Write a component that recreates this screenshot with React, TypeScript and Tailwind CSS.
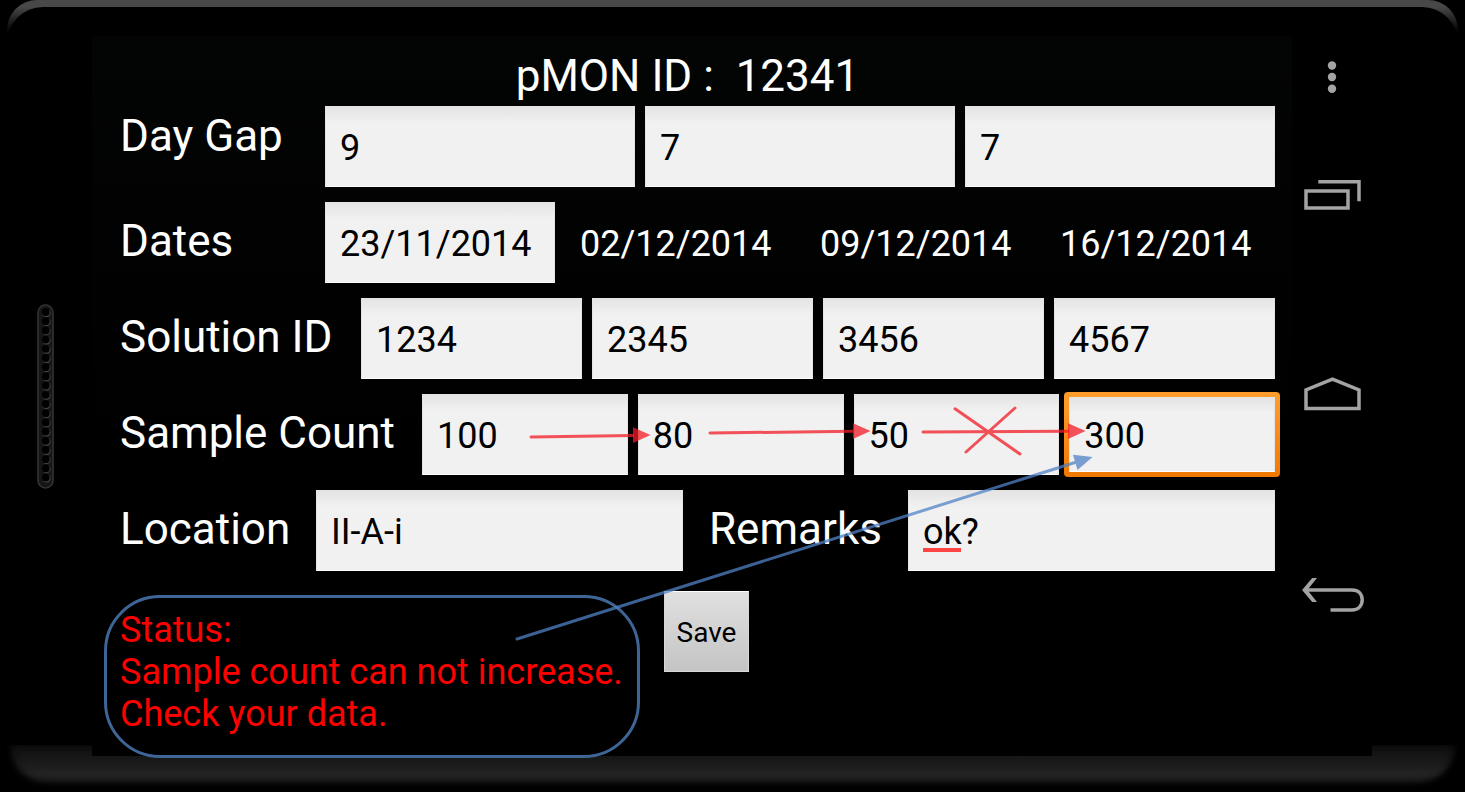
import type { InputHTMLAttributes, ReactNode } from "react";

const speakerHoles = Array.from({ length: 19 }, (_, i) => 8 + i * 9.2);

function Field({ className = "", ...rest }: InputHTMLAttributes<HTMLInputElement>) {
  return (
    <input
      type="text"
      className={`h-[81px] w-full min-w-0 border border-[#e4e4e4] border-b-white bg-[#f1f1f1] bg-linear-to-b from-[#e4e4e4] to-[#f1f1f1] to-20% pt-0.5 pl-[14px] text-[36px] text-black outline-none ${className}`}
      {...rest}
    />
  );
}

function Row({ children }: { children: ReactNode }) {
  return <div className="flex h-[81px] items-center pl-5">{children}</div>;
}

function SpeakerGrille() {
  return (
    <svg width="17" height="185" viewBox="0 0 17 185" aria-hidden="true">
      <rect x="1" y="1" width="15" height="183" rx="7.5" fill="#161616" stroke="#333" strokeWidth="1.6" />
      {speakerHoles.map((cy) => (
        <g key={cy}>
          <circle cx="9.4" cy={cy + 0.7} r="4.2" fill="#484848" />
          <circle cx="8.8" cy={cy} r="3.9" fill="#000" />
        </g>
      ))}
    </svg>
  );
}

function NavButton({ label, className, children }: { label: string; className: string; children: ReactNode }) {
  return (
    <button type="button" aria-label={label} className={`flex w-full items-center justify-center ${className}`}>
      {children}
    </button>
  );
}

function NavBar() {
  return (
    <nav className="flex w-20 shrink-0 flex-col pt-6">
      <NavButton label="Menu" className="h-[34px]">
        <svg width="10" height="34" viewBox="0 0 10 34" fill="#a3a3a3">
          <circle cx="5" cy="5.5" r="4.2" />
          <circle cx="5" cy="17" r="4.2" />
          <circle cx="5" cy="28.7" r="4.2" />
        </svg>
      </NavButton>
      <NavButton label="Recent apps" className="h-[200px]">
        <svg width="58" height="32" viewBox="0 0 58 32" fill="none" stroke="#a3a3a3" strokeWidth="3.5">
          <path d="M15.300 3.800H56V23.200" />
          <rect x="3" y="13" width="42" height="17" />
        </svg>
      </NavButton>
      <NavButton label="Home" className="h-[200px]">
        <svg width="58" height="34" viewBox="0 0 58 34" fill="none" stroke="#a3a3a3" strokeWidth="3.5">
          <path d="M3 31.500V13L29.500 2.200 56 13V31.500Z" />
        </svg>
      </NavButton>
      <NavButton label="Back" className="h-[200px]">
        <svg width="64" height="36" viewBox="-5 0 64 36" fill="none" stroke="#a3a3a3" strokeWidth="3.5">
          <path d="M1 14H47C53.5 14 57.2 18 57.2 23.800S53.5 34 47 34H25.500" />
          <path d="M-2.900 14 7.2 2H12L2.4 14 12 26H7.2Z" fill="#a3a3a3" stroke="none" />
        </svg>
      </NavButton>
    </nav>
  );
}

function Annotations() {
  return (
    <svg
      className="pointer-events-none absolute top-0 left-0 h-[720px] w-[1200px]"
      viewBox="92 36 1200 720"
      fill="none"
      strokeLinecap="round"
      aria-hidden="true"
    >
      <g stroke="#f21b25" strokeWidth="3" opacity="0.75">
        <path d="M531 437 633 435.4M710 433 853 431.3M923 432 1068 431.2" />
        <path d="M955 408.8 1020 454M1015 408 966 452" />
      </g>
      <g fill="#f21b25" opacity="0.75">
        <path d="M633 427.3 650.5 435 633 443Z" />
        <path d="M853 423.3 870.5 431 853 439Z" />
        <path d="M1068 423.3 1085.5 431 1068 439Z" />
      </g>
      <g opacity="0.75">
        <path d="M517 639 1075 462.5" stroke="#5081c5" strokeWidth="3" />
        <path d="M1073 454.8 1092.5 457 1077.5 470Z" fill="#5081c5" />
      </g>
    </svg>
  );
}

export default function App() {
  const label = "shrink-0 text-[44px] leading-[52px] whitespace-nowrap";
  const centred = `${label} pb-1`;
  const date = "pt-0.5 pl-[25px] text-[36px] whitespace-nowrap";

  return (
    <div className="relative isolate min-h-screen overflow-hidden bg-black font-['Roboto',sans-serif] text-white">
      <div className="absolute inset-x-[7px] top-0 -z-10 h-12 rounded-t-[30px] bg-linear-to-b from-[#484848] from-15% to-black to-85%">
        <div className="mt-[7px] h-12 rounded-t-[36px] bg-black" />
      </div>
      <div className="absolute inset-x-[7px] bottom-[5px] -z-10 h-[42px] rounded-b-[40px] bg-linear-to-b from-[#0e0e0e] via-[#232323] via-70% to-[#181818] shadow-[inset_0_-4px_6px_#000,inset_6px_0_8px_-4px_#000,inset_-6px_0_8px_-4px_#000]" />

      <div className="flex pt-9">
        <div className="flex h-[720px] w-[92px] shrink-0 items-center pl-[37px]">
          <SpeakerGrille />
        </div>

        <div className="mr-[93px] flex h-[720px] min-w-0 flex-1 bg-black">
          <main className="relative min-w-0 flex-1 bg-linear-to-b from-[#030504] to-black pt-[14px] pr-[17px] pl-2">
            <h1 className="mb-1 text-center text-[44px] leading-[52px] whitespace-pre">pMON ID :&nbsp; 12341</h1>

            <form onSubmit={(e) => e.preventDefault()}>
              <div className="flex flex-col gap-[15px]">
                <Row>
                  <label htmlFor="gap1" className={`${label} w-[205px] self-start pt-1`}>Day Gap</label>
                  <div className="grid min-w-0 flex-1 grid-cols-3 gap-[10px]">
                    <Field id="gap1" defaultValue="9" />
                    <Field aria-label="Day Gap 2" defaultValue="7" />
                    <Field aria-label="Day Gap 3" defaultValue="7" />
                  </div>
                </Row>
                <Row>
                  <label htmlFor="date1" className={`${centred} w-[205px]`}>Dates</label>
                  <div className="w-[230px] shrink-0">
                    <Field id="date1" defaultValue="23/11/2014" />
                  </div>
                  <div className="grid min-w-0 flex-1 grid-cols-3">
                    <span className={date}>02/12/2014</span>
                    <span className={date}>09/12/2014</span>
                    <span className={date}>16/12/2014</span>
                  </div>
                </Row>
                <Row>
                  <label htmlFor="sol1" className={`${centred} w-[241px]`}>Solution ID</label>
                  <div className="grid min-w-0 flex-1 grid-cols-4 gap-[10px]">
                    <Field id="sol1" defaultValue="1234" />
                    <Field aria-label="Solution ID 2" defaultValue="2345" />
                    <Field aria-label="Solution ID 3" defaultValue="3456" />
                    <Field aria-label="Solution ID 4" defaultValue="4567" />
                  </div>
                </Row>
                <Row>
                  <label htmlFor="count1" className={`${centred} w-[302px]`}>Sample Count</label>
                  <div className="grid min-w-0 flex-1 grid-cols-4 gap-[10px]">
                    <Field id="count1" defaultValue="100" />
                    <Field aria-label="Sample Count 2" defaultValue="80" />
                    <Field aria-label="Sample Count 3" defaultValue="50" />
                    <div className="relative flex min-w-0 items-center">
                      <span className="absolute -inset-x-[5px] -inset-y-0.5 rounded bg-linear-to-b from-[#ff9d2b] to-[#f07800]" />
                      <Field aria-label="Sample Count 4" defaultValue="300" className="relative max-h-[75px]" />
                    </div>
                  </div>
                </Row>
                <Row>
                  <label htmlFor="location" className={`${centred} w-[196px]`}>Location</label>
                  <div className="min-w-0 flex-1">
                    <Field id="location" defaultValue="II-A-i" />
                  </div>
                  <label htmlFor="remarks" className={`${centred} w-[225px] pl-[26px]`}>Remarks</label>
                  <div className="relative min-w-0 flex-1">
                    <Field id="remarks" defaultValue="ok?" spellCheck={false} />
                    <span className="absolute bottom-[19px] left-[15px] h-1 w-[38px] bg-[#ff4444]" />
                  </div>
                </Row>
              </div>

              <div className="mt-5 flex items-start gap-6">
                <p
                  role="status"
                  className="mt-1 ml-1 h-[163px] w-[536px] shrink-0 rounded-[56px] border-[3px] border-[#3e6596] pt-[11px] pl-[13px] text-[36px] leading-[42px] whitespace-nowrap text-[#ff0000]"
                >
                  Status:
                  <br />
                  Sample count can not increase.
                  <br />
                  Check your data.
                </p>
                <button
                  type="submit"
                  className="h-[81px] w-[85px] border border-[#d8d8d8] border-t-white bg-linear-to-b from-[#e0e0e0] to-[#c4c4c4] pt-0.5 text-[28px] text-black"
                >
                  Save
                </button>
              </div>
            </form>
            <Annotations />
          </main>
          <NavBar />
        </div>
      </div>
    </div>
  );
}
